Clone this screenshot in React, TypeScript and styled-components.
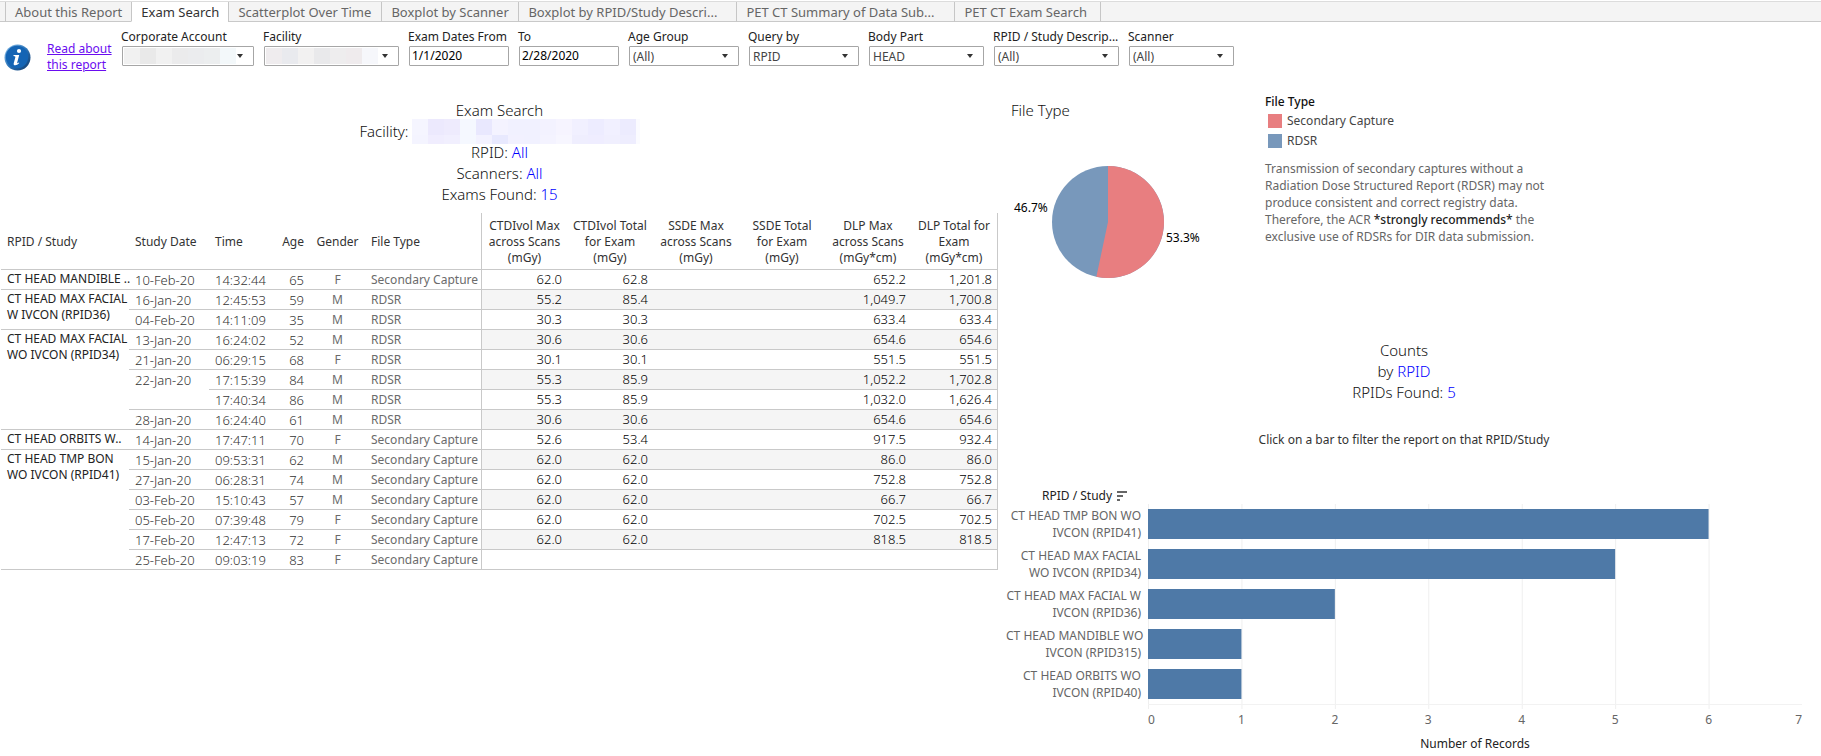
import React, { useState } from "react";
import styled, { createGlobalStyle } from "styled-components";

const GlobalStyle = createGlobalStyle`
  *, *::before, *::after { box-sizing: border-box; }
  body {
    margin: 0;
    background: #fff;
    color: #333;
    font: 400 12px/16px "Noto Sans", "Open Sans", sans-serif;
  }
`;

/* ---------- tabs ---------- */

const TabBar = styled.nav`
  display: flex;
  height: 21px;
  margin-top: 1px;
  padding-left: 5px;
  background: linear-gradient(#c9c9c9, #c9c9c9) bottom / 100% 1px no-repeat #f4f4f4;
  border-top: 1px solid #dcdcdc;
`;

const Tab = styled.button<{ $active?: boolean; $width: number }>`
  flex: 0 0 ${(p) => p.$width}px;
  height: 20px;
  padding: 0 9px;
  border: 0;
  border-left: 1px solid #c6c6c6;
  border-bottom: 1px solid ${(p) => (p.$active ? "#fff" : "#c9c9c9")};
  background: ${(p) => (p.$active ? "#fff" : "#f4f4f4")};
  color: ${(p) => (p.$active ? "#333" : "#666")};
  font: 400 13px/18px "Noto Sans", "Open Sans", sans-serif;
  text-align: left;
  white-space: nowrap;
  cursor: pointer;

  &:last-child {
    border-right: 1px solid #c6c6c6;
  }
`;

/* ---------- filters ---------- */

const FilterBar = styled.header`
  display: flex;
  gap: 10px;
  padding-top: 7px;
`;

const About = styled.div`
  display: flex;
  flex: 0 0 112px;
  gap: 16px;
  padding: 12px 0 0 4px;
`;

const InfoIcon = styled.svg`
  flex: none;
  margin-top: 3px;
`;

const AboutLink = styled.a`
  color: #6a0cf0;
`;

const Field = styled.label<{ $width: number }>`
  flex: 0 0 ${(p) => p.$width}px;
  min-width: 0;
  color: #222;
`;

const FieldName = styled.span`
  display: block;
  height: 17px;
  margin: 0 -6px 0 -1px;
  white-space: nowrap;
`;

const SelectBox = styled.span`
  display: block;
  position: relative;
  height: 20px;
`;

const Select = styled.select`
  width: 100%;
  height: 20px;
  padding: 1px 20px 0 3px;
  border: 1px solid #a6a6a6;
  border-radius: 1px;
  background: #fff;
  color: #444;
  font: 400 12px/16px "Noto Sans", "Open Sans", sans-serif;
  appearance: none;
`;

const Arrow = styled.svg`
  position: absolute;
  top: 8px;
  right: 11px;
  pointer-events: none;
`;

const Mask = styled.span`
  display: flex;
  position: absolute;
  top: 2px;
  left: 2px;
  pointer-events: none;
`;

const MaskTile = styled.span<{ $color: string }>`
  width: 16px;
  height: 16px;
  background: ${(p) => p.$color};
`;

const DateInput = styled.input`
  display: block;
  width: 100%;
  height: 20px;
  padding: 0 2px 2px;
  border: 1px solid #a6a6a6;
  border-radius: 1px;
  color: #000;
  font: 400 12px/16px "Noto Sans", "Open Sans", sans-serif;
`;

/* ---------- report layout ---------- */

const Report = styled.main`
  display: grid;
  grid-template-columns: 998px minmax(600px, 1fr);
  gap: 8px;
  padding-right: 19px;
`;

const ExamPanel = styled.section`
  padding: 27px 0 0 1px;
`;

const Heading = styled.div`
  color: #111;
  font-size: 15px;
  font-weight: 300;
  line-height: 21px;
  text-align: center;
`;

const HeadingLine = styled.div`
  display: flex;
  justify-content: center;
  align-items: center;
  height: 21px;
  white-space: pre;
`;

const Blue = styled.span`
  color: #0000ff;
`;

const FacilityMask = styled.span`
  display: grid;
  grid-template-columns: repeat(14, 16px) 4px;
  grid-template-rows: 16px 9px;
  margin-left: 3px;
`;

const FacilityTile = styled.span<{ $color: string }>`
  background: ${(p) => p.$color};
`;

/* ---------- table ---------- */

const line = "1px solid #c9c9c9";

const Table = styled.table`
  width: 100%;
  margin-top: 8px;
  table-layout: fixed;
  border-collapse: separate;
  border-spacing: 0;
`;

const Head = styled.th<{ $align?: string; $first?: boolean; $last?: boolean }>`
  height: 57px;
  padding: ${(p) => (p.$align === "center" ? "1px 0 0" : "2px 6px 0")};
  border-bottom: ${line};
  border-left: ${(p) => (p.$first ? line : "0")};
  border-right: ${(p) => (p.$last ? line : "0")};
  font-weight: 400;
  text-align: ${(p) => p.$align ?? "left"};
  white-space: nowrap;
`;

const StudyCell = styled.th`
  padding: 1px 0 0 6px;
  border-bottom: ${line};
  color: #222;
  font-weight: 400;
  text-align: left;
  vertical-align: top;
  white-space: nowrap;
`;

const DimCell = styled.td<{ $align?: string; $number?: boolean }>`
  height: 20px;
  padding: 1px 6px 0;
  border-bottom: ${line};
  color: ${(p) => (p.$number ? "#333" : "#6b6b6b")};
  font-size: ${(p) => (p.$number ? 13 : 12)}px;
  font-weight: ${(p) => (p.$number ? 300 : 400)};
  line-height: 18px;
  text-align: ${(p) => p.$align ?? "left"};
  vertical-align: top;
  white-space: nowrap;
`;

const ValueCell = styled.td<{ $band: boolean; $first: boolean; $last: boolean }>`
  height: 20px;
  padding: 0 5px 1px;
  border-bottom: ${line};
  border-left: ${(p) => (p.$first ? line : "0")};
  border-right: ${(p) => (p.$last ? line : "0")};
  background: ${(p) => (p.$band ? "#f5f5f5" : "#fff")};
  color: #000;
  font-size: 13px;
  font-weight: 300;
  line-height: 18px;
  text-align: right;
`;

/* ---------- right side ---------- */

const SidePanel = styled.section`
  min-width: 0;
`;

const FileTypeRow = styled.div`
  display: grid;
  grid-template-columns: 259px minmax(0, 296px);
  height: 267px;
`;

const PieTitle = styled.h2`
  margin: 0;
  padding: 27px 0 0 5px;
  color: #111;
  font-size: 15px;
  font-weight: 300;
  line-height: 21px;
`;

const PieChart = styled.svg`
  display: block;
  margin-top: 29px;
`;

const PieText = styled.text`
  fill: #000;
  font-size: 12px;
`;

const Legend = styled.div`
  padding-top: 20px;
`;

const LegendTitle = styled.h3`
  margin: 0 0 1px;
  color: #111;
  font-size: 12px;
  font-weight: 500;
  line-height: 17px;
`;

const LegendItem = styled.div`
  display: flex;
  align-items: center;
  gap: 5px;
  height: 20px;
  padding-left: 3px;
  color: #444;
`;

const Swatch = styled.span<{ $color: string }>`
  width: 14px;
  height: 14px;
  background: ${(p) => p.$color};
`;

const Note = styled.p`
  margin: 9px 0 0;
  color: #666;
  line-height: 17px;
`;

const Strong = styled.strong`
  color: #222;
  font-weight: 500;
`;

const Hint = styled.p`
  margin: 28px 0 38px;
  line-height: 18px;
  text-align: center;
`;

const Chart = styled.div`
  display: grid;
  grid-template-columns: 142px minmax(0, 1fr);
`;

const ChartTitle = styled.div`
  display: flex;
  grid-column: 1 / -1;
  align-items: center;
  gap: 5px;
  height: 17px;
  padding-left: 36px;
  color: #222;
`;

const BarNames = styled.div`
  display: flex;
  flex-direction: column;
`;

const BarName = styled.div`
  display: flex;
  flex-direction: column;
  justify-content: center;
  height: 40px;
  padding-right: 7px;
  color: #666;
  line-height: 17px;
  text-align: right;
  white-space: nowrap;
`;

const Plot = styled.svg`
  display: block;
  width: 100%;
  height: 226px;
`;

const Tick = styled.text`
  fill: #666;
  font-size: 12px;
`;

const AxisTitle = styled.div`
  grid-column: 2;
  margin-top: 6px;
  color: #222;
  text-align: center;
`;

/* ---------- data ---------- */

const tabs: [string, number][] = [
  ["About this Report", 126],
  ["Exam Search", 97],
  ["Scatterplot Over Time", 153],
  ["Boxplot by Scanner", 137],
  ["Boxplot by RPID/Study Descri...", 218],
  ["PET CT Summary of Data Sub...", 218],
  ["PET CT Exam Search", 147],
];

type Filter = { name: string; width: number; value?: string; date?: boolean; mask?: string[] };

const filters: Filter[] = [
  { name: "Corporate Account", width: 132, mask: ["#f1f1f1", "#e9e9e9", "#f1f1f1", "#ebebec", "#ebecee", "#eceeef", "#f3f8fa"] },
  { name: "Facility", width: 135, mask: ["#efecee", "#e9eaee", "#f2f1f1", "#e9e9eb", "#eeedee", "#efebed", "#f6f7fb"] },
  { name: "Exam Dates From", width: 100, value: "1/1/2020", date: true },
  { name: "To", width: 100, value: "2/28/2020", date: true },
  { name: "Age Group", width: 110, value: "(All)" },
  { name: "Query by", width: 110, value: "RPID" },
  { name: "Body Part", width: 115, value: "HEAD" },
  { name: "RPID / Study Descrip...", width: 125, value: "(All)" },
  { name: "Scanner", width: 105, value: "(All)" },
];

const facilityTiles = [
  "#f5f5ff", "#ece9fd", "#eeebfd", "#f5f8ff", "#e9e8fe", "#f4f3ff", "#f1f1ff", "#f1f1ff", "#f3f2ff", "#f6f4ff", "#f1f0ff", "#edecff", "#f1f0ff", "#ecebfe", "#fbfbff",
  "#f4f4ff", "#f0edfe", "#f1effe", "#f5f8ff", "#f3f2ff", "#e8e9fe", "#f2f1ff", "#f1f1ff", "#f4f3ff", "#f7f6ff", "#efeefe", "#efedff", "#f0effe", "#eeedfe", "#fbfbff",
];

type Exam = {
  study?: string[];
  studyRows?: number;
  date?: string;
  dateRows?: number;
  time: string;
  age: number;
  gender: string;
  type: string;
  values: string[];
};

const SC = "Secondary Capture";
const RD = "RDSR";

const exams: Exam[] = [
  { study: ["CT HEAD MANDIBLE .."], studyRows: 1, date: "10-Feb-20", time: "14:32:44", age: 65, gender: "F", type: SC, values: ["62.0", "62.8", "652.2", "1,201.8"] },
  { study: ["CT HEAD MAX FACIAL", "W IVCON (RPID36)"], studyRows: 2, date: "16-Jan-20", time: "12:45:53", age: 59, gender: "M", type: RD, values: ["55.2", "85.4", "1,049.7", "1,700.8"] },
  { date: "04-Feb-20", time: "14:11:09", age: 35, gender: "M", type: RD, values: ["30.3", "30.3", "633.4", "633.4"] },
  { study: ["CT HEAD MAX FACIAL", "WO IVCON (RPID34)"], studyRows: 5, date: "13-Jan-20", time: "16:24:02", age: 52, gender: "M", type: RD, values: ["30.6", "30.6", "654.6", "654.6"] },
  { date: "21-Jan-20", time: "06:29:15", age: 68, gender: "F", type: RD, values: ["30.1", "30.1", "551.5", "551.5"] },
  { date: "22-Jan-20", dateRows: 2, time: "17:15:39", age: 84, gender: "M", type: RD, values: ["55.3", "85.9", "1,052.2", "1,702.8"] },
  { time: "17:40:34", age: 86, gender: "M", type: RD, values: ["55.3", "85.9", "1,032.0", "1,626.4"] },
  { date: "28-Jan-20", time: "16:24:40", age: 61, gender: "M", type: RD, values: ["30.6", "30.6", "654.6", "654.6"] },
  { study: ["CT HEAD ORBITS W.."], studyRows: 1, date: "14-Jan-20", time: "17:47:11", age: 70, gender: "F", type: SC, values: ["52.6", "53.4", "917.5", "932.4"] },
  { study: ["CT HEAD TMP BON", "WO IVCON (RPID41)"], studyRows: 6, date: "15-Jan-20", time: "09:53:31", age: 62, gender: "M", type: SC, values: ["62.0", "62.0", "86.0", "86.0"] },
  { date: "27-Jan-20", time: "06:28:31", age: 74, gender: "M", type: SC, values: ["62.0", "62.0", "752.8", "752.8"] },
  { date: "03-Feb-20", time: "15:10:43", age: 57, gender: "M", type: SC, values: ["62.0", "62.0", "66.7", "66.7"] },
  { date: "05-Feb-20", time: "07:39:48", age: 79, gender: "F", type: SC, values: ["62.0", "62.0", "702.5", "702.5"] },
  { date: "17-Feb-20", time: "12:47:13", age: 72, gender: "F", type: SC, values: ["62.0", "62.0", "818.5", "818.5"] },
  { date: "25-Feb-20", time: "09:03:19", age: 83, gender: "F", type: SC, values: ["", "", "", ""] },
];

const columns = [128, 80, 61, 40, 55, 116, 86, 86, 86, 86, 86, 87];

const measures = [
  ["CTDIvol Max", "across Scans", "(mGy)"],
  ["CTDIvol Total", "for Exam", "(mGy)"],
  ["SSDE Max", "across Scans", "(mGy)"],
  ["SSDE Total", "for Exam", "(mGy)"],
  ["DLP Max", "across Scans", "(mGy*cm)"],
  ["DLP Total for", "Exam", "(mGy*cm)"],
];

const bars: { name: string[]; count: number }[] = [
  { name: ["CT HEAD TMP BON WO", "IVCON (RPID41)"], count: 6 },
  { name: ["CT HEAD MAX FACIAL", "WO IVCON (RPID34)"], count: 5 },
  { name: ["CT HEAD MAX FACIAL W", "IVCON (RPID36)"], count: 2 },
  { name: ["CT HEAD MANDIBLE WO", "IVCON (RPID315)"], count: 1 },
  { name: ["CT HEAD ORBITS WO", "IVCON (RPID40)"], count: 1 },
];

const AXIS_MAX = 7;
const at = (n: number) => `${(n / AXIS_MAX) * 100}%`;

/* ---------- parts ---------- */

const Lines = ({ text }: { text: string[] }) => (
  <>
    {text.map((t) => (
      <div key={t}>{t}</div>
    ))}
  </>
);

function FilterField({ name, width, value, date, mask }: Filter) {
  return (
    <Field $width={width}>
      <FieldName>{name}</FieldName>
      {date ? (
        <DateInput type="text" defaultValue={value} />
      ) : (
        <SelectBox>
          <Select>
            <option>{value ?? ""}</option>
          </Select>
          {mask && (
            <Mask>
              {mask.map((c, i) => (
                <MaskTile key={i} $color={c} />
              ))}
            </Mask>
          )}
          <Arrow width="6" height="4" viewBox="0 0 6 4">
            <path d="M0 0h6L3 4z" fill="#333" />
          </Arrow>
        </SelectBox>
      )}
    </Field>
  );
}

function Info() {
  return (
    <InfoIcon width="27" height="27" viewBox="0 0 27 27" aria-hidden="true">
      <defs>
        <linearGradient id="rim" x1="0" y1="0" x2="1" y2="1">
          <stop offset="0" stopColor="#8fc4ee" />
          <stop offset="0.5" stopColor="#2c74b8" />
          <stop offset="1" stopColor="#0d3566" />
        </linearGradient>
      </defs>
      <circle cx="13.5" cy="13.5" r="13" fill="url(#rim)" />
      <circle cx="13" cy="13" r="11.2" fill="#1464b4" />
      <ellipse cx="15" cy="7" rx="2.1" ry="1.9" fill="#fff" />
      <path d="M9.6 11h5.6l-2 7.6c-.2.8.4.9 1.6-.1l.5.6c-1.6 1.7-3 2.3-4.2 2.2-1.300-.1-1.700-1-1.300-2.400l1.500-5.500c.2-.9 0-1.300-1.900-1.400z" fill="#fff" />
    </InfoIcon>
  );
}

function ExamTable() {
  return (
    <Table>
      <colgroup>
        {columns.map((w, i) => (
          <col key={i} width={w} />
        ))}
      </colgroup>
      <thead>
        <tr>
          <Head>RPID / Study</Head>
          <Head>Study Date</Head>
          <Head>Time</Head>
          <Head $align="right">Age</Head>
          <Head $align="center">Gender</Head>
          <Head>File Type</Head>
          {measures.map((m, i) => (
            <Head key={i} $align="center" $first={i === 0} $last={i === measures.length - 1}>
              <Lines text={m} />
            </Head>
          ))}
        </tr>
      </thead>
      <tbody>
        {exams.map((e, row) => {
          const values = [e.values[0], e.values[1], "", "", e.values[2], e.values[3]];
          return (
            <tr key={row}>
              {e.study && (
                <StudyCell rowSpan={e.studyRows} scope="rowgroup">
                  <Lines text={e.study} />
                </StudyCell>
              )}
              {e.date && (
                <DimCell $number rowSpan={e.dateRows ?? 1}>
                  {e.date}
                </DimCell>
              )}
              <DimCell $number>{e.time}</DimCell>
              <DimCell $number $align="right">
                {e.age}
              </DimCell>
              <DimCell $align="center">{e.gender}</DimCell>
              <DimCell>{e.type}</DimCell>
              {values.map((v, i) => (
                <ValueCell key={i} $band={row % 2 === 1} $first={i === 0} $last={i === 5}>
                  {v}
                </ValueCell>
              ))}
            </tr>
          );
        })}
      </tbody>
    </Table>
  );
}

function Pie() {
  return (
    <PieChart width="259" height="140" viewBox="0 0 259 140" role="img" aria-label="File Type">
      <circle cx="102" cy="72" r="56" fill="#7898bb" />
      <path d="M102 72V16A56 56 0 1 1 90.360 126.780Z" fill="#e87e80" />
      <PieText x="8" y="62">46.7%</PieText>
      <PieText x="160" y="92">53.3%</PieText>
    </PieChart>
  );
}

function CountsChart() {
  return (
    <Chart>
      <ChartTitle>
        RPID / Study
        <svg width="10" height="10" viewBox="0 0 10 10" aria-hidden="true">
          <path d="M0 0h10v2H0zM0 4h6v2H0zM0 8h3v2H0z" fill="#666" />
        </svg>
      </ChartTitle>
      <BarNames>
        {bars.map((b) => (
          <BarName key={b.name[1]}>
            <Lines text={b.name} />
          </BarName>
        ))}
      </BarNames>
      <Plot role="img" aria-label="Number of Records by RPID / Study">
        {[0, 1, 2, 3, 4, 5, 6].map((n) => (
          <rect key={n} x={at(n)} y="0" width="1" height="205" fill="#efefef" />
        ))}
        <rect x="0" y="200" width="100%" height="1" fill="#f2f2f2" />
        {bars.map((b, i) => (
          <rect key={i} x="0" y={i * 40 + 5} width={at(b.count)} height="30" fill="#4e79a7" />
        ))}
        {[0, 1, 2, 3, 4, 5, 6, 7].map((n) => (
          <Tick key={n} x={at(n)} y="220" textAnchor={n === 0 ? "start" : n === AXIS_MAX ? "end" : "middle"}>
            {n}
          </Tick>
        ))}
      </Plot>
      <AxisTitle>Number of Records</AxisTitle>
    </Chart>
  );
}

export default function App() {
  const [active, setActive] = useState("Exam Search");

  return (
    <>
      <GlobalStyle />
      <TabBar>
        {tabs.map(([name, width]) => (
          <Tab key={name} $width={width} $active={name === active} onClick={() => setActive(name)}>
            {name}
          </Tab>
        ))}
      </TabBar>
      <FilterBar>
        <About>
          <Info />
          <AboutLink href="#about">
            Read about
            <br />
            this report
          </AboutLink>
        </About>
        {filters.map((f) => (
          <FilterField key={f.name} {...f} />
        ))}
      </FilterBar>
      <Report>
        <ExamPanel>
          <Heading>
            <HeadingLine>Exam Search</HeadingLine>
            <HeadingLine>
              Facility:
              <FacilityMask>
                {facilityTiles.map((c, i) => (
                  <FacilityTile key={i} $color={c} />
                ))}
              </FacilityMask>
            </HeadingLine>
            <HeadingLine>
              RPID: <Blue>All</Blue>
            </HeadingLine>
            <HeadingLine>
              Scanners: <Blue>All</Blue>
            </HeadingLine>
            <HeadingLine>
              Exams Found: <Blue>15</Blue>
            </HeadingLine>
          </Heading>
          <ExamTable />
        </ExamPanel>
        <SidePanel>
          <FileTypeRow>
            <div>
              <PieTitle>File Type</PieTitle>
              <Pie />
            </div>
            <Legend>
              <LegendTitle>File Type</LegendTitle>
              <LegendItem>
                <Swatch $color="#e87e80" />
                Secondary Capture
              </LegendItem>
              <LegendItem>
                <Swatch $color="#7898bb" />
                RDSR
              </LegendItem>
              <Note>
                Transmission of secondary captures without a Radiation Dose Structured Report (RDSR) may not produce
                consistent and correct registry data. Therefore, the ACR <Strong>*strongly recommends*</Strong> the
                exclusive use of RDSRs for DIR data submission.
              </Note>
            </Legend>
          </FileTypeRow>
          <Heading>
            <HeadingLine>Counts</HeadingLine>
            <HeadingLine>
              by <Blue>RPID</Blue>
            </HeadingLine>
            <HeadingLine>
              RPIDs Found: <Blue>5</Blue>
            </HeadingLine>
          </Heading>
          <Hint>Click on a bar to filter the report on that RPID/Study</Hint>
          <CountsChart />
        </SidePanel>
      </Report>
    </>
  );
}
